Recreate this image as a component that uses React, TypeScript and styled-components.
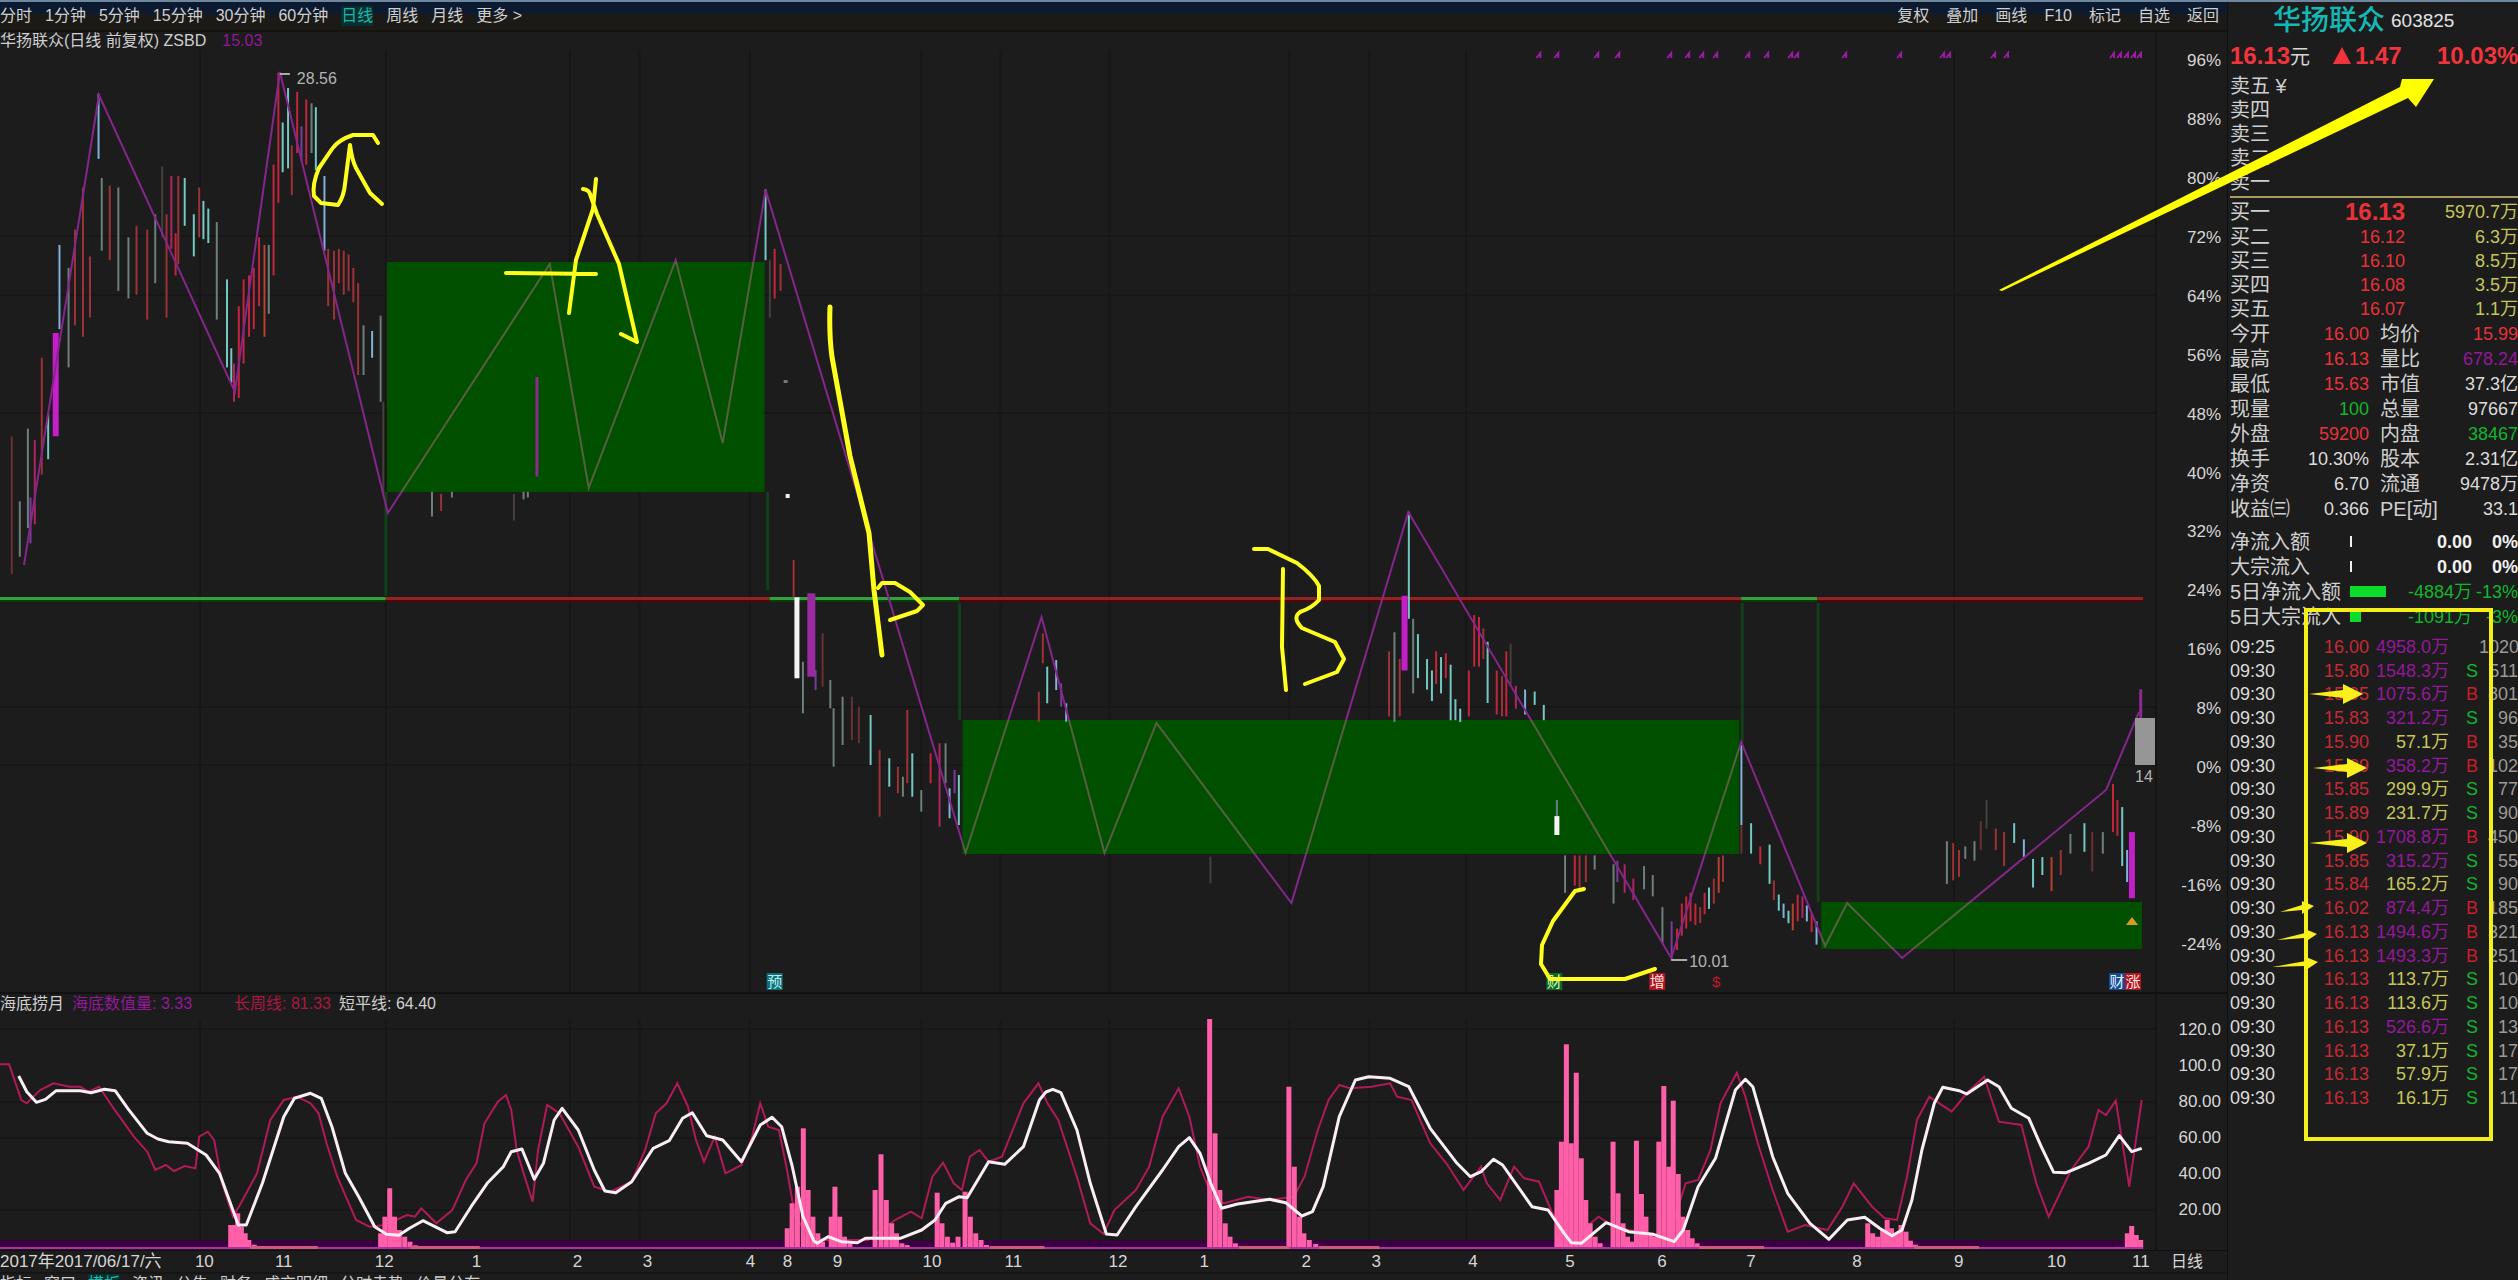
import React from "react";
import styled, { createGlobalStyle } from "styled-components";

const Global = createGlobalStyle`
  *, *::before, *::after { box-sizing: border-box; }
  body {
    margin: 0;
    background: #1c1c1c;
    color: #d6d6d6;
    font-family: "Liberation Sans", "Noto Sans CJK SC", sans-serif;
    font-size: 18px;
  }
`;

const RED = "#e8323a";
const GREEN = "#12b52c";
const PURPLE = "#93189b";
const YELLOW = "#c6c65a";

/* ---------- layout ---------- */

const Page = styled.div`
  position: relative;
  display: flex;
  height: 100vh;
  overflow: hidden;
  border-top: 2px solid #6f869f;
`;

const Main = styled.main`
  flex: 1;
  min-width: 0;
  display: flex;
  flex-direction: column;

  > * {
    flex-shrink: 0;
  }
`;

const Toolbar = styled.nav`
  display: flex;
  justify-content: space-between;
  align-items: center;
  height: 30px;
  padding-right: 8px;
  background: linear-gradient(#0c1a30 0 10px, #1b1a16 14px);
  border-bottom: 2px solid #14130e;
`;

const ButtonGroup = styled.div<{ $gap: number }>`
  display: flex;
  gap: ${(p) => p.$gap}px;
`;

const ToolButton = styled.button<{ $active?: boolean }>`
  padding: 0;
  border: 0;
  background: ${(p) => (p.$active ? "#06302f" : "none")};
  color: ${(p) => (p.$active ? "#1fb5ad" : "#cfcfcf")};
  font: inherit;
  font-size: 16px;
  line-height: 20px;
  white-space: nowrap;
`;

const Pane = styled.section<{ $ruled?: boolean }>`
  display: flex;
  border-top: ${(p) => (p.$ruled ? "2px solid #111" : "0")};
`;

const Plot = styled.div`
  flex: 1;
  min-width: 0;
  display: flex;
  flex-direction: column;
  border-right: 2px solid #141414;
`;

const Legend = styled.div<{ $height: number }>`
  display: flex;
  align-items: center;
  gap: 8px;
  height: ${(p) => p.$height}px;
  font-size: 16px;
  line-height: 18px;
  white-space: nowrap;
`;

const LegendItem = styled.span<{ $color?: string; $lead?: number }>`
  color: ${(p) => p.$color ?? "#cfcfcf"};
  margin-left: ${(p) => p.$lead ?? 0}px;
`;

const Chart = styled.svg<{ $height: number }>`
  display: block;
  width: 100%;
  height: ${(p) => p.$height}px;
`;

const Scale = styled.ol<{ $rows: string; $top: number; $bottom: number }>`
  display: grid;
  grid-template-rows: ${(p) => p.$rows};
  align-items: center;
  justify-items: end;
  width: 70px;
  margin: 0;
  padding: ${(p) => p.$top}px 6px ${(p) => p.$bottom}px 0;
  list-style: none;
  font-size: 17px;
  line-height: 18px;
`;

const TimeAxis = styled.div`
  display: flex;
  align-items: center;
  height: 24px;
  border-top: 1px solid #111;
  border-bottom: 2px solid #151515;
  font-size: 17px;
  line-height: 20px;
`;

const Ticks = styled.div`
  flex: 1;
  min-width: 0;
  display: flex;
`;

const Tick = styled.span<{ $span: number }>`
  flex: ${(p) => p.$span} 1 0;
  min-width: 0;
  white-space: nowrap;
`;

const Period = styled.span`
  width: 56px;
  font-size: 16px;
`;

const Footer = styled.footer`
  display: flex;
  gap: 12px;
`;

/* ---------- quote panel ---------- */

const Aside = styled.aside`
  width: 291px;
  flex: none;
  padding-left: 2px;
  overflow: hidden;
  border-left: 1px solid #101010;
`;

const Title = styled.h1`
  display: flex;
  align-items: center;
  justify-content: flex-start;
  gap: 6px;
  height: 38px;
  margin: 0;
  padding-left: 43px;
  color: #16b8b6;
  font-size: 28px;
  font-weight: 500;
  line-height: 32px;
  white-space: nowrap;
`;

const Code = styled.small`
  color: #e2e2e2;
  font-size: 19px;
  font-weight: 400;
`;

const PriceLine = styled.div`
  display: grid;
  grid-template-columns: 103px 104px 90px;
  align-items: center;
  height: 32px;
  color: #f0343c;
  font-size: 24px;
  font-weight: 700;
  line-height: 28px;
  white-space: nowrap;
`;

const Unit = styled.span`
  color: #d6d6d6;
  font-size: 20px;
  font-weight: 400;
`;

const Triangle = styled.i`
  display: inline-block;
  margin-right: 4px;
  border: 9px solid transparent;
  border-top: 0;
  border-bottom: 17px solid #f0343c;
`;

const Table = styled.table<{ $height?: number; $ruled?: boolean }>`
  width: 288px;
  height: ${(p) => (p.$height ? `${p.$height}px` : "auto")};
  table-layout: fixed;
  border-collapse: collapse;
  border-top: ${(p) => (p.$ruled ? "2px solid #a99c66" : "0")};
`;

const Column = styled.col<{ $width: number }>`
  width: ${(p) => p.$width}px;
`;

const Row = styled.tr<{ $height?: number }>`
  height: ${(p) => (p.$height ? `${p.$height}px` : "auto")};
`;

const Label = styled.th`
  padding: 0;
  overflow: visible;
  color: #cfcfcf;
  font-size: 20px;
  font-weight: 400;
  line-height: 22px;
  text-align: left;
  white-space: nowrap;
`;

const PairLabel = styled(Label)`
  padding-left: 11px;
`;

const Cell = styled.td<{
  $color?: string;
  $align?: string;
  $strong?: boolean;
  $large?: boolean;
  $pad?: number;
}>`
  padding: 0 0 0 ${(p) => p.$pad ?? 0}px;
  color: ${(p) => p.$color ?? "#dcdcdc"};
  font-size: ${(p) => (p.$large ? 24 : 18)}px;
  font-weight: ${(p) => (p.$strong || p.$large ? 700 : 400)};
  line-height: 20px;
  text-align: ${(p) => p.$align ?? "right"};
  white-space: nowrap;
`;

const FlowBar = styled.i<{ $width: number; $color: string }>`
  display: block;
  width: ${(p) => p.$width}px;
  height: 11px;
  background: ${(p) => p.$color};
`;

const Gap = styled.div<{ $height: number }>`
  height: ${(p) => p.$height}px;
`;

const Markup = styled.svg`
  position: absolute;
  left: 0;
  top: -2px;
  width: 100%;
  height: 1280px;
  pointer-events: none;
`;

/* ---------- chart data ---------- */

type Frame = [number, number, number, number];
type Bar = [number, number, number, string];
type Point = [number, number];

const fx = (f: Frame, x: number) => Math.round((f[0] + x / f[2]) * 10) / 10;
const fy = (f: Frame, y: number) => Math.round((f[1] + y / f[3]) * 10) / 10;

const INK: Record<string, string> = {
  r: "#9c3238",
  R: "#c2263c",
  o: "#b8402c",
  D: "#6b3032",
  d: "#45403c",
  g: "#6d7f7a",
  c: "#74c8c2",
  b: "#7fb2d8",
  v: "#7a3b9a",
  p: "#b02462",
  m: "#c31fc9",
  M: "#9a2aa2",
  n: "#8c2a90",
  w: "#f4f4f4",
};
const WIDE: Record<string, number> = { m: 6, M: 8, w: 5, n: 3 };

const CANDLES: { frame: Frame; bars: Bar[] }[] = [
  {
    frame: [0, 0, 1.867, 2.613],
    bars: [
      [22, 1140, 1500, "D"], [37, 1310, 1455, "g"], [52, 1120, 1380, "g"], [57, 1300, 1420, "v"], [65, 1150, 1370, "p"],
      [78, 935, 1240, "r"], [90, 1080, 1200, "c"], [104, 870, 1140, "m"], [111, 640, 860, "b"], [128, 700, 960, "g"],
      [140, 600, 850, "r"], [155, 490, 880, "r"], [168, 670, 830, "r"], [184, 245, 415, "b"], [190, 465, 655, "g"],
      [205, 485, 680, "r"], [221, 490, 760, "g"], [240, 620, 780, "g"], [255, 590, 770, "r"], [275, 600, 835, "r"],
      [290, 560, 740, "g"], [303, 435, 620, "d"], [311, 560, 830, "r"], [320, 460, 650, "p"], [328, 610, 720, "R"],
      [333, 460, 690, "r"], [345, 465, 590, "c"], [362, 560, 670, "c"], [372, 490, 620, "r"], [380, 525, 625, "c"],
      [389, 545, 635, "c"], [405, 580, 835, "g"], [424, 730, 960, "c"], [432, 910, 1000, "c"], [437, 950, 1050, "p"],
      [446, 800, 1040, "R"], [455, 730, 950, "R"], [465, 720, 880, "R"], [474, 700, 860, "R"], [484, 620, 800, "R"],
      [494, 640, 880, "o"], [502, 640, 820, "g"], [511, 430, 720, "R"], [520, 190, 530, "R"], [528, 320, 450, "c"],
      [538, 230, 440, "c"], [545, 380, 510, "r"], [555, 240, 400, "R"], [563, 330, 420, "v"], [572, 260, 430, "R"],
      [582, 270, 400, "g"], [590, 280, 445, "c"], [606, 460, 655, "b"], [613, 650, 800, "r"], [624, 655, 835, "r"],
      [633, 650, 740, "r"], [642, 655, 770, "r"], [651, 665, 760, "r"], [660, 700, 790, "r"], [669, 740, 980, "r"],
      [679, 850, 980, "g"], [695, 865, 935, "b"], [711, 825, 1050, "g"], [716, 1050, 1290, "d"],
      [807, 1285, 1350, "g"], [824, 1290, 1335, "r"], [844, 1285, 1300, "g"], [960, 1290, 1360, "d"],
      [978, 1285, 1305, "g"], [986, 1285, 1300, "g"], [1003, 985, 1245, "n"],
      [1430, 495, 680, "c"], [1438, 680, 830, "d"], [1447, 650, 780, "R"], [1458, 690, 760, "r"],
    ],
  },
  {
    frame: [740, 540, 3, 3],
    bars: [
      [162, 60, 170, "r"], [172, 172, 415, "w"], [190, 365, 520, "g"], [215, 160, 410, "M"], [228, 390, 450, "v"],
      [249, 280, 440, "D"], [272, 420, 505, "g"], [282, 505, 680, "g"], [309, 470, 615, "g"], [337, 470, 600, "D"],
      [358, 500, 610, "D"], [393, 525, 675, "c"], [420, 630, 830, "r"], [449, 655, 740, "c"], [475, 680, 760, "r"],
      [490, 710, 770, "g"], [503, 510, 730, "r"], [518, 640, 770, "c"], [545, 750, 815, "g"], [573, 640, 730, "R"],
      [600, 610, 860, "p"], [618, 610, 730, "g"], [630, 745, 835, "b"], [645, 690, 760, "v"], [658, 705, 855, "c"],
      [910, 280, 370, "r"], [898, 455, 545, "r"], [923, 380, 490, "c"], [950, 360, 450, "b"], [965, 430, 500, "v"],
      [980, 490, 545, "b"], [1413, 950, 1030, "d"],
    ],
  },
  {
    frame: [740, 150, 1.867, 2.613],
    bars: [
      [1250, 945, 1225, "c"], [1242, 1165, 1360, "m"], [1258, 1225, 1420, "g"], [1213, 1310, 1480, "r"],
      [1223, 1260, 1495, "g"], [1233, 1330, 1480, "r"], [1267, 1265, 1380, "c"], [1284, 1330, 1410, "c"],
      [1293, 1360, 1440, "c"], [1301, 1310, 1395, "R"], [1310, 1325, 1420, "c"], [1319, 1315, 1380, "R"],
      [1328, 1345, 1490, "c"], [1337, 1435, 1490, "c"], [1346, 1460, 1495, "c"], [1362, 1360, 1480, "R"],
      [1372, 1215, 1350, "R"], [1381, 1220, 1350, "R"], [1389, 1250, 1330, "r"], [1397, 1285, 1445, "c"],
      [1414, 1360, 1475, "R"], [1424, 1375, 1480, "r"], [1432, 1310, 1480, "R"], [1440, 1290, 1400, "d"],
      [1450, 1400, 1460, "p"], [1467, 1410, 1475, "b"], [1485, 1415, 1450, "c"], [1502, 1450, 1490, "c"],
    ],
  },
  {
    frame: [1480, 450, 2.063, 2.8],
    bars: [
      [160, 980, 1025, "g"], [160, 1025, 1078, "w"], [177, 1135, 1240, "g"], [197, 1135, 1220, "R"],
      [207, 1135, 1230, "r"], [220, 1135, 1210, "r"], [238, 1135, 1175, "g"], [277, 1160, 1270, "g"],
      [285, 1150, 1210, "v"], [300, 1160, 1240, "p"], [318, 1200, 1260, "p"], [340, 1165, 1230, "g"],
      [358, 1190, 1250, "g"], [378, 1280, 1380, "g"], [397, 1320, 1430, "v"], [408, 1340, 1400, "R"],
      [418, 1270, 1360, "R"], [427, 1250, 1340, "R"], [436, 1240, 1320, "R"], [446, 1270, 1330, "R"],
      [456, 1280, 1325, "r"], [465, 1240, 1300, "R"], [474, 1225, 1285, "c"], [484, 1200, 1270, "r"],
      [494, 1140, 1240, "o"], [503, 1135, 1210, "r"], [541, 820, 1050, "b"], [541, 1050, 1130, "D"],
      [561, 1045, 1130, "c"], [580, 1110, 1160, "R"], [599, 1105, 1215, "c"], [608, 1205, 1260, "r"],
      [618, 1245, 1290, "c"], [628, 1270, 1310, "b"], [638, 1290, 1325, "c"], [647, 1270, 1345, "o"],
      [657, 1245, 1320, "R"], [667, 1250, 1310, "p"], [676, 1275, 1320, "b"], [686, 1300, 1350, "R"],
      [696, 1320, 1385, "b"], [965, 1095, 1215, "g"], [978, 1100, 1205, "r"], [990, 1120, 1195, "r"],
      [1003, 1110, 1145, "g"], [1022, 1095, 1150, "g"], [1035, 1040, 1120, "D"], [1047, 980, 1060, "d"],
      [1066, 1060, 1120, "r"], [1083, 1070, 1165, "r"], [1104, 1045, 1100, "c"], [1124, 1090, 1140, "b"],
      [1143, 1145, 1225, "c"], [1162, 1140, 1190, "c"], [1181, 1140, 1235, "o"], [1200, 1120, 1190, "r"],
      [1220, 1075, 1130, "g"], [1249, 1045, 1125, "c"], [1265, 1070, 1180, "D"], [1287, 1070, 1130, "g"],
      [1308, 935, 1070, "R"], [1317, 980, 1080, "R"], [1327, 1000, 1165, "c"], [1337, 1120, 1210, "b"],
      [1347, 1070, 1255, "m"], [1365, 670, 750, "n"],
    ],
  },
];

const ZIGZAG =
  "24,565 99,95 235,392 280,72 388,513 550,264 589,488 676,260 723,443 766,190 966,853 1042,617 1105,853 1157,723 1292,903 1409,512 1672,958 1742,742 1826,946 1848,903 1903,958 2107,790 2140,712";

const BOXES = [
  [387, 262, 378, 230],
  [963, 720, 777, 134],
  [1822, 902, 321, 47],
];

const BASELINE: [number, number, boolean][] = [
  [0, 386, true],
  [386, 770, false],
  [770, 960, true],
  [960, 1742, false],
  [1742, 1818, true],
  [1818, 2144, false],
];

const DROPS: [number, number, number][] = [
  [386, 492, 596],
  [768, 492, 590],
  [960, 603, 720],
  [1743, 603, 742],
  [1819, 603, 902],
];

const SIGNALS = [
  1540, 1558, 1598, 1619, 1671, 1689, 1703, 1717, 1749, 1768, 1792, 1798, 1846, 1901, 1944, 1950, 1995, 2008, 2114, 2121,
  2128, 2135, 2141,
];

const BADGES: [number, string, string, string][] = [
  [775, "预", "#0d6f78", "#bfeeee"],
  [1555, "财", "#0c6a22", "#d8f5c0"],
  [1658, "增", "#b0141c", "#ffe4e4"],
  [1717, "$", "none", "#c01a2c"],
  [2118, "财", "#124a94", "#e8f0ff"],
  [2134, "涨", "#b0141c", "#ffe4e4"],
];

const LEFT: Frame = [0, 970, 1.867, 3];
const MID: Frame = [740, 970, 1.867, 3];
const RIGHT: Frame = [1480, 970, 2.01, 3];

const line = (parts: [Frame, Point[]][]) =>
  parts.map(([f, pts]) => pts.map(([x, y]) => `${fx(f, x)},${fy(f, y)}`).join(" ")).join(" ");

const SLOW = line([
  [LEFT, [[35, 318], [50, 365], [68, 397], [85, 388], [105, 362], [150, 362], [170, 368], [195, 358], [215, 362], [240, 418], [275, 490], [295, 507], [315, 515], [350, 520], [385, 555], [410, 610], [445, 765], [460, 765], [490, 640], [530, 440], [550, 385], [580, 370], [600, 385], [620, 470], [645, 610], [670, 680], [700, 770], [722, 793], [745, 796], [765, 775], [790, 752], [835, 788], [850, 785], [880, 710], [910, 640], [940, 590], [955, 545], [975, 537], [998, 628], [1015, 580], [1035, 450], [1050, 415], [1080, 480], [1110, 600], [1130, 663], [1150, 668], [1180, 635], [1220, 535], [1250, 512], [1275, 445], [1293, 428], [1320, 497], [1350, 510], [1385, 575], [1420, 465], [1442, 442], [1460, 470], [1480, 590], [1500, 740], [1520, 812]]],
  [MID, [[145, 820], [165, 800], [190, 815], [220, 818], [235, 805], [300, 805], [340, 780], [365, 750], [385, 700], [410, 680], [425, 683], [465, 575], [495, 583], [530, 530], [560, 390], [572, 366], [585, 358], [600, 368], [630, 480], [655, 640], [685, 792], [705, 795], [740, 710], [790, 600], [820, 530], [840, 503], [860, 550], [880, 640], [900, 715], [930, 702], [990, 688], [1020, 698], [1050, 738], [1070, 725], [1090, 650], [1120, 440], [1150, 330], [1175, 320], [1215, 325], [1250, 350], [1290, 475], [1340, 580], [1365, 620], [1385, 605], [1408, 568], [1425, 585], [1480, 710], [1510, 720], [1540, 790]]],
  [RIGHT, [[185, 818], [205, 820], [255, 758], [300, 785], [350, 793], [392, 815], [410, 780], [440, 650], [475, 565], [515, 360], [535, 328], [550, 350], [590, 560], [620, 670], [665, 760], [703, 808], [740, 750], [775, 742], [805, 775], [830, 797], [850, 780], [870, 690], [890, 540], [915, 400], [932, 352], [965, 362], [980, 372], [1022, 330], [1045, 350], [1070, 415], [1105, 445], [1130, 530], [1155, 607], [1180, 608], [1225, 580], [1260, 555], [1287, 497], [1312, 545], [1332, 535]]],
]);

const FAST = line([
  [LEFT, [[0, 283], [17, 283], [40, 390], [50, 400], [75, 360], [100, 340], [130, 350], [150, 350], [165, 365], [185, 350], [210, 410], [250, 500], [275, 545], [290, 600], [310, 585], [325, 603], [345, 588], [365, 595], [372, 500], [388, 485], [400, 510], [415, 640], [435, 740], [450, 700], [480, 610], [505, 450], [530, 390], [555, 380], [580, 400], [595, 430], [610, 520], [630, 620], [665, 750], [690, 770], [720, 765], [760, 735], [775, 740], [787, 715], [815, 760], [845, 720], [870, 630], [890, 580], [905, 460], [930, 395], [945, 375], [955, 420], [965, 540], [980, 620], [995, 695], [1005, 540], [1022, 405], [1045, 430], [1080, 530], [1110, 650], [1140, 665], [1180, 635], [1205, 540], [1225, 430], [1245, 400], [1265, 340], [1285, 410], [1300, 510], [1315, 575], [1335, 500], [1355, 610], [1385, 585], [1405, 500], [1420, 400], [1435, 470], [1455, 480], [1470, 600], [1485, 740]]],
  [MID, [[130, 800], [160, 810], [240, 810], [290, 750], [320, 725], [340, 745], [360, 620], [380, 578], [400, 640], [415, 660], [430, 560], [448, 540], [465, 575], [490, 560], [510, 480], [530, 400], [558, 340], [575, 400], [595, 450], [630, 620], [655, 760], [680, 792], [700, 720], [740, 660], [765, 590], [790, 440], [820, 355], [840, 440], [860, 590], [885, 690], [905, 700], [950, 680], [990, 690], [1035, 680], [1055, 620], [1080, 480], [1100, 390], [1120, 345], [1140, 355], [1180, 350], [1215, 340], [1228, 380], [1255, 390], [1290, 520], [1320, 580], [1352, 660], [1385, 590]]],
  [RIGHT, [[15, 640], [42, 690], [70, 590], [90, 625], [120, 635], [150, 740], [190, 800], [240, 740], [260, 760], [300, 780], [380, 800], [415, 640], [440, 630], [465, 540], [485, 400], [518, 308], [535, 380], [560, 520], [590, 660], [620, 785], [655, 765], [700, 780], [730, 710], [753, 640], [790, 710], [815, 745], [840, 750], [860, 620], [880, 450], [905, 380], [950, 425], [980, 370], [1015, 320], [1045, 455], [1090, 465], [1120, 640], [1145, 740], [1190, 600], [1225, 530], [1245, 420], [1260, 435], [1280, 392], [1307, 650], [1332, 390]]],
]);

const VOLUMES: [Frame, Point[]][] = [
  [LEFT, [[430, 765], [437, 765], [443, 730], [450, 770], [457, 790], [464, 810], [474, 824], [710, 790], [718, 740], [727, 655], [736, 740], [745, 780], [755, 800], [765, 815], [775, 826]]],
  [MID, [[88, 775], [97, 700], [107, 650], [118, 475], [127, 660], [136, 740], [145, 790], [154, 815], [170, 740], [177, 650], [186, 740], [195, 800], [205, 822], [252, 660], [263, 553], [273, 690], [283, 760], [292, 790], [302, 820], [312, 825], [368, 668], [377, 760], [387, 800], [397, 818], [407, 800], [420, 665], [430, 740], [440, 790], [450, 810], [460, 825], [877, 147], [887, 490], [896, 660], [906, 760], [915, 800], [925, 820], [935, 828], [1025, 350], [1035, 590], [1045, 740], [1053, 790], [1063, 810], [1075, 822], [1085, 829]]],
  [RIGHT, [[155, 660], [164, 515], [174, 223], [184, 520], [194, 308], [204, 565], [213, 690], [222, 760], [232, 800], [242, 820], [268, 515], [278, 670], [288, 760], [297, 800], [306, 815], [315, 512], [325, 672], [334, 740], [344, 790], [352, 800], [360, 515], [370, 348], [380, 590], [389, 392], [399, 612], [408, 740], [418, 780], [427, 805], [437, 820], [447, 828], [780, 760], [790, 790], [800, 800], [810, 780], [819, 750], [828, 775], [838, 790], [847, 765], [857, 785], [866, 812], [876, 824], [1302, 790], [1311, 768], [1320, 795], [1329, 810]]],
];

const TAILS: [number, number][] = [
  [250, 318], [410, 480], [990, 1045], [1240, 1290], [1320, 1380], [1700, 1765], [1915, 1980],
];

const MONTHS: [string, number][] = [
  ["2017年2017/06/17/六", 195], ["10", 80], ["11", 100], ["12", 97], ["1", 101], ["2", 70], ["3", 103], ["4", 37],
  ["8", 50], ["9", 90], ["10", 82], ["11", 104], ["12", 91], ["1", 102], ["2", 70], ["3", 97], ["4", 97], ["5", 92],
  ["6", 89], ["7", 106], ["8", 102], ["9", 93], ["10", 85], ["11", 39],
];

const PERCENTS = ["96", "88", "80", "72", "64", "56", "48", "40", "32", "24", "16", "8", "0", "-8", "-16", "-24"];
const LEVELS = ["120.0", "100.0", "80.00", "60.00", "40.00", "20.00"];

/* ---------- quote data ---------- */

const BIDS = [
  ["买一", "16.13", "5970.7万"],
  ["买二", "16.12", "6.3万"],
  ["买三", "16.10", "8.5万"],
  ["买四", "16.08", "3.5万"],
  ["买五", "16.07", "1.1万"],
];

const STATS: [string, string, string, string, string, string][] = [
  ["今开", "16.00", RED, "均价", "15.99", RED],
  ["最高", "16.13", RED, "量比", "678.24", PURPLE],
  ["最低", "15.63", RED, "市值", "37.3亿", ""],
  ["现量", "100", GREEN, "总量", "97667", ""],
  ["外盘", "59200", RED, "内盘", "38467", GREEN],
  ["换手", "10.30%", "", "股本", "2.31亿", ""],
  ["净资", "6.70", "", "流通", "9478万", ""],
  ["收益㈢", "0.366", "", "PE[动]", "33.1", ""],
];

const FLOWS: [string, number, string, string, string][] = [
  ["净流入额", 2, "0.00", "0%", "#f0f0f0"],
  ["大宗流入", 2, "0.00", "0%", "#f0f0f0"],
  ["5日净流入额", 36, "-4884万", "-13%", GREEN],
  ["5日大宗流入", 11, "-1091万", "-3%", GREEN],
];

const TRADES: [string, string, string, string, string][] = [
  ["09:25", "16.00", "4958.0", "", "1020"],
  ["09:30", "15.80", "1548.3", "S", "511"],
  ["09:30", "15.95", "1075.6", "B", "801"],
  ["09:30", "15.83", "321.2", "S", "96"],
  ["09:30", "15.90", "57.1", "B", "35"],
  ["09:30", "15.89", "358.2", "B", "102"],
  ["09:30", "15.85", "299.9", "S", "77"],
  ["09:30", "15.89", "231.7", "S", "90"],
  ["09:30", "15.90", "1708.8", "B", "450"],
  ["09:30", "15.85", "315.2", "S", "55"],
  ["09:30", "15.84", "165.2", "S", "90"],
  ["09:30", "16.02", "874.4", "B", "185"],
  ["09:30", "16.13", "1494.6", "B", "321"],
  ["09:30", "16.13", "1493.3", "B", "251"],
  ["09:30", "16.13", "113.7", "S", "10"],
  ["09:30", "16.13", "113.6", "S", "10"],
  ["09:30", "16.13", "526.6", "S", "13"],
  ["09:30", "16.13", "37.1", "S", "17"],
  ["09:30", "16.13", "57.9", "S", "17"],
  ["09:30", "16.13", "16.1", "S", "11"],
];

/* ---------- components ---------- */

const Grid = ({ rows, top, bottom }: { rows: number[]; top: number; bottom: number }) => (
  <g stroke="#171717" strokeWidth="2">
    {rows.map((y) => (
      <line key={y} x1="0" x2="2156" y1={y} y2={y} />
    ))}
    {[200, 386, 570, 640, 750, 922, 1001, 1110, 1290, 1370, 1467, 1955].map((x) => (
      <line key={x} x1={x} x2={x} y1={top} y2={bottom} />
    ))}
  </g>
);

function PriceChart() {
  return (
    <Chart $height={942} viewBox="0 50 2156 942" preserveAspectRatio="none" role="img" aria-label="日线">
      <defs>
        <clipPath id="boxes">
          {BOXES.map(([x, y, w, h]) => (
            <rect key={x} x={x} y={y} width={w} height={h} />
          ))}
        </clipPath>
      </defs>
      <Grid rows={[236, 295, 413, 707, 765]} top={50} bottom={992} />
      {BASELINE.map(([a, b, up]) => (
        <g key={a}>
          <rect x={a} y="599" width={b - a} height="3" fill={up ? "#0a3a0c" : "#520505"} />
          <rect x={a} y="597" width={b - a} height="3" fill={up ? "#35a03c" : "#8e2526"} />
        </g>
      ))}
      {DROPS.map(([x, a, b]) => (
        <line key={x} x1={x} x2={x} y1={a} y2={b} stroke="#10401a" strokeWidth="3" />
      ))}
      {BOXES.map(([x, y, w, h]) => (
        <rect key={x} x={x} y={y} width={w} height={h} fill="#005000" />
      ))}
      {CANDLES.map(({ frame, bars }) =>
        bars.map(([x, a, b, ink]) => (
          <line
            key={`${frame[0]}-${frame[1]}-${x}-${a}`}
            x1={fx(frame, x)}
            x2={fx(frame, x)}
            y1={fy(frame, a)}
            y2={fy(frame, b)}
            stroke={INK[ink]}
            strokeWidth={WIDE[ink] ?? 2}
          />
        ))
      )}
      <polyline points={ZIGZAG} fill="none" stroke="#84268a" strokeWidth="2" />
      <polyline points={ZIGZAG} fill="none" stroke="#005000" strokeWidth="3" clipPath="url(#boxes)" />
      <polyline points={ZIGZAG} fill="none" stroke="#56603f" strokeWidth="2" clipPath="url(#boxes)" />
      <rect x="784" y="380" width="4" height="3" fill="#777" />
      <rect x="786" y="494" width="4" height="4" fill="#eee" />
      <g stroke="#9b1ba3" strokeWidth="2">
        {SIGNALS.map((x) => (
          <path key={x} d={`M${x - 3} 58l4 -5v5`} fill="none" />
        ))}
      </g>
      <path d="M280 74h10M1672 960h16" stroke="#aaa" strokeWidth="2" />
      <g fill="#b4b4b4" fontSize="16">
        <text x="297" y="84">28.56</text>
        <text x="1690" y="967">10.01</text>
        <text x="2136" y="782">14</text>
      </g>
      <rect x="2136" y="718" width="20" height="47" fill="#969696" />
      <path d="M2127 925l6 -8l6 8z" fill="#d89c22" />
      {BADGES.map(([x, label, bg, ink]) => (
        <g key={x}>
          <rect x={x - 8} y="973" width="16" height="17" fill={bg} />
          <text x={x} y="987" fontSize="15" textAnchor="middle" fill={ink}>
            {label}
          </text>
        </g>
      ))}
    </Chart>
  );
}

function IndicatorChart() {
  return (
    <Chart $height={236} viewBox="0 1014 2156 236" preserveAspectRatio="none" role="img" aria-label="海底捞月">
      <Grid rows={[1029, 1102, 1138, 1210]} top={1020} bottom={1240} />
      <rect x="0" y="1240" width="2144" height="8" fill="#38003f" />
      <polyline points={FAST} fill="none" stroke="#b01a58" strokeWidth="2" />
      {VOLUMES.map(([f, pts]) =>
        pts.map(([x, y]) => (
          <rect key={`${f[0]}-${x}`} x={fx(f, x) - 2} y={fy(f, y)} width="5" height={1249 - fy(f, y)} fill="#ff5fa8" />
        ))
      )}
      <rect x="0" y="1247" width="2144" height="2" fill="#b02fa4" />
      {TAILS.map(([a, b]) => (
        <rect key={a} x={a} y="1246" width={b - a} height="3" fill="#d0587c" />
      ))}
      <polyline points={SLOW} fill="none" stroke="#f8eef4" strokeWidth="3" strokeLinejoin="round" />
    </Chart>
  );
}

function Annotations() {
  const bold = [
    [2309, 694, 2363],
    [2313, 768, 2367],
    [2309, 843, 2367],
  ];
  const slim = [
    [2280, 912, 2314, 906],
    [2277, 940, 2317, 934],
    [2272, 967, 2318, 962],
  ];
  return (
    <Markup viewBox="0 0 2518 1280" preserveAspectRatio="none" aria-hidden="true">
      <g fill="none" stroke="#ffff1e" strokeWidth="4" strokeLinecap="round" strokeLinejoin="round">
        <path d="M378 143L373 135H353Q338 140 332 149L319 168Q312 184 314 196L321 203L338 205Q344 196 345 184L350 145Q352 160 356 168L370 193L382 204" />
        <path d="M596 179L593 209L576 260L569 313M583 189Q589 190 590 194L597 214L619 264L637 342L621 334M506 273L596 274" />
        <path d="M830 307Q829 335 832 357L850 456L869 533L874 590L882 655" strokeWidth="5" />
        <path d="M878 588L882 583H895L910 592L923 605L917 611L890 620" />
        <path d="M1283 569L1282 647L1286 690M1254 549H1268L1297 563Q1314 576 1319 586V600Q1312 608 1300 612Q1292 618 1302 628L1335 642L1344 659L1337 672L1305 684" />
        <path d="M1584 889L1575 891L1553 921L1542 945L1541 964L1550 979H1625L1655 969" />
      </g>
      <path d="M1999 290L2400 87L2402 79H2434L2416 107L2408 98L2002 291Z" fill="#ffff00" />
      <rect x="2306" y="610" width="185" height="529" fill="none" stroke="#f4ee1a" strokeWidth="4" />
      <g fill="#f8f01c">
        {bold.map(([x, y, tip]) => (
          <path key={y} d={`M${x} ${y}L${tip - 20} ${y - 4}V${y - 10}L${tip} ${y}L${tip - 20} ${y + 10}V${y + 4}Z`} />
        ))}
        {slim.map(([x, y, tx, ty]) => (
          <path key={y} d={`M${x} ${y}L${tx - 12} ${ty - 1}L${tx - 12} ${ty - 5}L${tx} ${ty}L${tx - 12} ${ty + 8}V${ty + 4}Z`} />
        ))}
      </g>
    </Markup>
  );
}

export default function App() {
  return (
    <>
      <Global />
      <Page>
        <Main>
          <Toolbar>
            <ButtonGroup $gap={13}>
              {["分时", "1分钟", "5分钟", "15分钟", "30分钟", "60分钟", "日线", "周线", "月线", "更多 >"].map((t) => (
                <ToolButton key={t} type="button" $active={t === "日线"}>
                  {t}
                </ToolButton>
              ))}
            </ButtonGroup>
            <ButtonGroup $gap={17}>
              {["复权", "叠加", "画线", "F10", "标记", "自选", "返回"].map((t) => (
                <ToolButton key={t} type="button">
                  {t}
                </ToolButton>
              ))}
            </ButtonGroup>
          </Toolbar>

          <Pane>
            <Plot>
              <Legend $height={18}>
                <LegendItem>华扬联众(日线 前复权) ZSBD</LegendItem>
                <LegendItem $color={PURPLE} $lead={8}>15.03</LegendItem>
              </Legend>
              <PriceChart />
            </Plot>
            <Scale $rows="repeat(16, 1fr)" $top={0} $bottom={18}>
              {PERCENTS.map((p) => (
                <li key={p}>{p}%</li>
              ))}
            </Scale>
          </Pane>

          <Pane $ruled>
            <Plot>
              <Legend $height={20}>
                <LegendItem>海底捞月</LegendItem>
                <LegendItem $color={PURPLE}>海底数值量: 3.33</LegendItem>
                <LegendItem $color="#a81840" $lead={34}>长周线: 81.33</LegendItem>
                <LegendItem>短平线: 64.40</LegendItem>
              </Legend>
              <IndicatorChart />
            </Plot>
            <Scale $rows="repeat(6, 36px)" $top={18} $bottom={0}>
              {LEVELS.map((v) => (
                <li key={v}>{v}</li>
              ))}
            </Scale>
          </Pane>

          <TimeAxis>
            <Ticks>
              {MONTHS.map(([m, span], i) => (
                <Tick key={i} $span={span}>
                  {m}
                </Tick>
              ))}
            </Ticks>
            <Period>日线</Period>
          </TimeAxis>

          <Footer>
            {["指标", "窗口", "模板", "资讯", "公告", "财务", "成交明细", "分时走势", "价量分布"].map((t) => (
              <ToolButton key={t} type="button" $active={t === "模板"}>
                {t}
              </ToolButton>
            ))}
          </Footer>
        </Main>

        <Aside>
          <Title>
            华扬联众 <Code>603825</Code>
          </Title>
          <PriceLine>
            <span>
              16.13<Unit>元</Unit>
            </span>
            <span>
              <Triangle />
              1.47
            </span>
            <span>10.03%</span>
          </PriceLine>
          <Gap $height={2} />
          <Table>
            <tbody>
              {["卖五", "卖四", "卖三", "卖二", "卖一"].map((l, i) => (
                <Row key={l} $height={24}>
                  <Label scope="row">
                    {l}
                    {i === 0 ? " ¥" : ""}
                  </Label>
                </Row>
              ))}
            </tbody>
          </Table>
          <Gap $height={2} />
          <Table $ruled>
            <colgroup>
              <Column $width={75} />
              <Column $width={100} />
              <col />
            </colgroup>
            <tbody>
              {BIDS.map(([l, price, vol], i) => (
                <Row key={l} $height={i ? 24 : 28}>
                  <Label scope="row">{l}</Label>
                  <Cell $color={RED} $large={i === 0}>
                    {price}
                  </Cell>
                  <Cell $color={YELLOW}>{vol}</Cell>
                </Row>
              ))}
            </tbody>
          </Table>
          <Table>
            <colgroup>
              <Column $width={60} />
              <Column $width={79} />
              <Column $width={71} />
              <col />
            </colgroup>
            <tbody>
              {STATS.map(([a, av, ac, b, bv, bc]) => (
                <Row key={a} $height={25}>
                  <Label scope="row">{a}</Label>
                  <Cell $color={ac || undefined}>{av}</Cell>
                  <PairLabel scope="row">{b}</PairLabel>
                  <Cell $color={bc || undefined}>{bv}</Cell>
                </Row>
              ))}
            </tbody>
          </Table>
          <Gap $height={8} />
          <Table>
            <colgroup>
              <Column $width={120} />
              <Column $width={40} />
              <Column $width={82} />
              <col />
            </colgroup>
            <tbody>
              {FLOWS.map(([l, w, value, pct, color]) => (
                <Row key={l} $height={25}>
                  <Label scope="row">{l}</Label>
                  <Cell>
                    <FlowBar $width={w} $color={color === GREEN ? "#0cdc2c" : color} />
                  </Cell>
                  <Cell $color={color} $strong={color !== GREEN}>
                    {value}
                  </Cell>
                  <Cell $color={color} $strong={color !== GREEN}>
                    {pct}
                  </Cell>
                </Row>
              ))}
            </tbody>
          </Table>
          <Gap $height={6} />
          <Table $height={475}>
            <colgroup>
              <Column $width={60} />
              <Column $width={79} />
              <Column $width={80} />
              <Column $width={30} />
              <col />
            </colgroup>
            <tbody>
              {TRADES.map(([time, price, vol, side, lots], i) => (
                <Row key={i}>
                  <Cell $align="left">{time}</Cell>
                  <Cell $color="#c42a34">{price}</Cell>
                  <Cell $color={parseFloat(vol) > 300 ? PURPLE : YELLOW}>{vol}万</Cell>
                  <Cell $pad={16} $align="center" $color={side === "B" ? "#c81e2c" : GREEN}>
                    {side}
                  </Cell>
                  <Cell $color="#9a9a9a">{lots}</Cell>
                </Row>
              ))}
            </tbody>
          </Table>
        </Aside>
        <Annotations />
      </Page>
    </>
  );
}
